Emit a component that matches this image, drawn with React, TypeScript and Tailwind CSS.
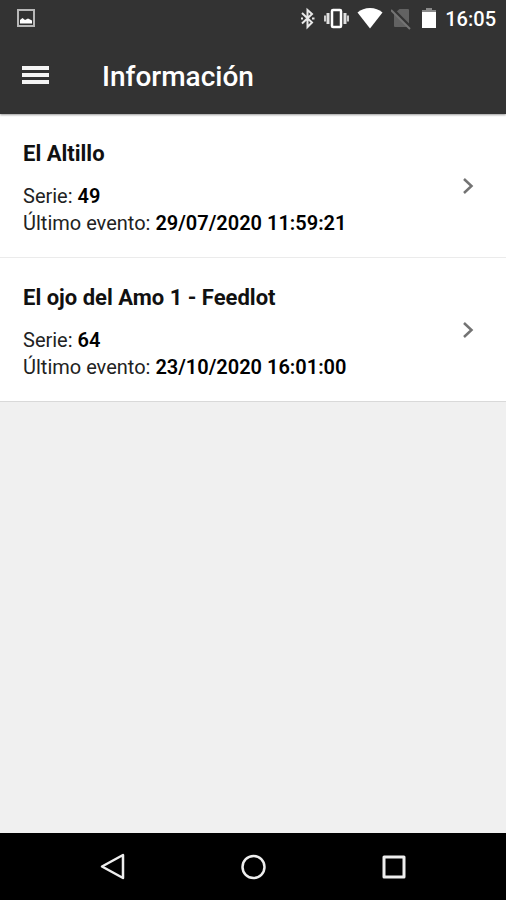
type Device = { name: string; serie: string; lastEvent: string };

const devices: Device[] = [
  { name: "El Altillo", serie: "49", lastEvent: "29/07/2020 11:59:21" },
  { name: "El ojo del Amo 1 - Feedlot", serie: "64", lastEvent: "23/10/2020 16:01:00" },
];

function StatusBar() {
  return (
    <div className="flex h-9 items-center justify-between pr-2.5 pl-4 text-white">
      <svg className="size-5" viewBox="0 0 20 20" aria-label="Imagen">
        <rect x="2" y="2" width="16" height="16" fill="none" stroke="#b8b8b8" strokeWidth="2" />
        <path d="M4 15.500V12l2.500-2 2.500 2 3-1.500 4 2v3z" fill="#fff" />
      </svg>
      <div className="flex items-center gap-2">
        <svg className="h-6 w-4" viewBox="0 0 16 24" fill="none" stroke="#e8e8e8" strokeWidth="2" aria-label="Bluetooth">
          <path d="M3 7l10 9.500L8.500 21V4L13 8 3 17.500" />
          <path d="M2 12.500h2M13 12.500h2.500" />
        </svg>
        <svg className="h-6 w-[26px]" viewBox="0 0 26 24" fill="none" aria-label="Vibración">
          <rect x="9" y="4" width="9" height="17" rx="1" stroke="#fff" strokeWidth="2.500" />
          <path d="M5 7v11M22 7v11" stroke="#e0e0e0" strokeWidth="3" />
          <path d="M2 9.500v6M25 9.500v6" stroke="#cfcfcf" strokeWidth="2" />
        </svg>
        <svg className="h-6 w-[26px]" viewBox="0 0 26 24" aria-label="Wi-Fi">
          <path d="M13 22.500L.5 6.500C4 3.500 8 2 13 2s9 1.500 12.500 4.500z" fill="#fff" />
        </svg>
        <svg className="h-6 w-5" viewBox="0 0 20 24" aria-label="Sin tarjeta SIM">
          <path d="M8.500 3H17q1 0 1 1v16q0 1-1 1H4q-1 0-1-1V8z" fill="#626262" />
          <path d="M1 2.500l18.500 18.500" stroke="#333" strokeWidth="3" />
          <path d="M0 4l19 19" stroke="#747474" strokeWidth="2" />
        </svg>
        <svg className="ml-0.5 h-6 w-4" viewBox="0 0 16 24" aria-label="Batería">
          <path d="M5 2h6v2h4v3H1V4h4z" fill="#8a8a8a" />
          <path d="M1 6h14v16H1z" fill="#fff" />
        </svg>
        <span className="pt-0.5 text-xl font-medium">16:05</span>
      </div>
    </div>
  );
}

function DeviceRow({ device }: { device: Device }) {
  return (
    <li className="border-b border-[#ebebeb] bg-white last:border-[#d9d9d9]">
      <a href="#" className="flex h-[143px] items-center justify-between pr-7 pl-[23px] text-black">
        <div className="pt-[5px]">
          <h2 className="mb-[15px] text-[22px] leading-7 font-bold text-[#111]">{device.name}</h2>
          <p className="text-xl leading-[27px] text-[#222]">
            Serie: <strong className="font-semibold text-black">{device.serie}</strong>
          </p>
          <p className="text-xl leading-[27px] text-[#222]">
            Último evento: <strong className="font-semibold text-black">{device.lastEvent}</strong>
          </p>
        </div>
        <svg className="h-5 w-5" viewBox="0 0 20 20" fill="none" stroke="#737373" strokeWidth="2.500" aria-hidden="true">
          <path d="M6 3l7.500 7L6 17" />
        </svg>
      </a>
    </li>
  );
}

export default function App() {
  return (
    <div className="flex min-h-screen flex-col bg-[#f0f0f0] font-[Roboto,sans-serif]">
      <header className="z-10 bg-[#333] shadow-[0_1px_2px_rgba(0,0,0,0.4)]">
        <StatusBar />
        <div className="flex h-[78px] items-center gap-[53px] pl-[22px] text-white">
          <button type="button" aria-label="Menú">
            <svg className="h-5 w-[27px]" viewBox="0 0 27 20" fill="#f5f5f5">
              <path d="M0 1h27v4H0zM0 8h27v4H0zM0 15h27v4H0z" />
            </svg>
          </button>
          <h1 className="pt-1 text-[28px] leading-9 font-medium">Información</h1>
        </div>
      </header>
      <main className="flex-1">
        <ul>
          {devices.map((device) => (
            <DeviceRow key={device.serie} device={device} />
          ))}
        </ul>
      </main>
      <nav className="flex h-[67px] items-center justify-center bg-black">
        <button type="button" aria-label="Atrás" className="flex w-[140px] justify-center">
          <svg className="size-7" viewBox="0 0 28 28" fill="none" stroke="#eee" strokeWidth="2.500" strokeLinejoin="round">
            <path d="M24 2v23L3 13.500z" />
          </svg>
        </button>
        <button type="button" aria-label="Inicio" className="flex w-[140px] justify-center">
          <svg className="size-7" viewBox="0 0 28 28" fill="none" stroke="#eee" strokeWidth="2.500">
            <circle cx="14.500" cy="14" r="11" />
          </svg>
        </button>
        <button type="button" aria-label="Recientes" className="flex w-[140px] justify-center">
          <svg className="size-7" viewBox="0 0 28 28" fill="none" stroke="#eee" strokeWidth="3" strokeLinejoin="round">
            <path d="M5 4h20v20H5z" />
          </svg>
        </button>
      </nav>
    </div>
  );
}
